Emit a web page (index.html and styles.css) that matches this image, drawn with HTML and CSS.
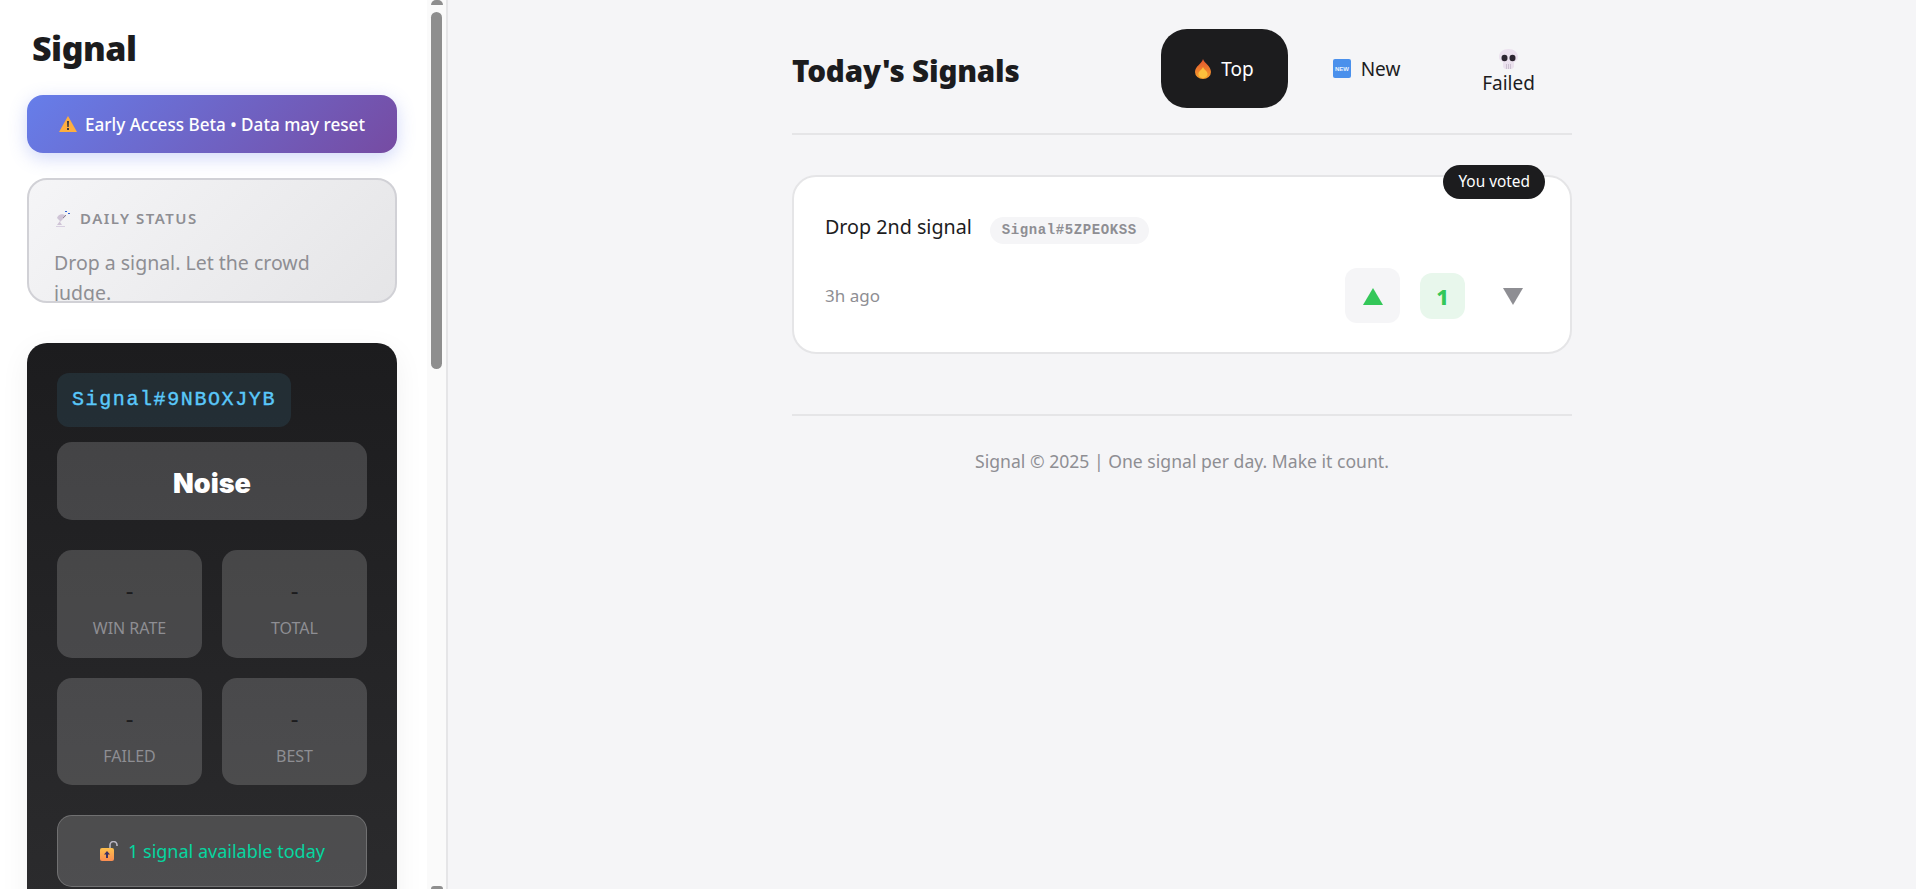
FILE: index.html
```html
<!DOCTYPE html>
<html lang="en">
<head>
  <meta charset="UTF-8" />
  <title>Signal</title>
  <link rel="stylesheet" href="styles.css">
</head>
<body>
  <aside class="sidebar">
    <div class="sidebar-inner">
      <h1 class="logo">Signal</h1>

      <div class="beta-banner">
        <svg class="emoji" width="18" height="16" viewBox="0 0 18 16"><path d="M9 0 18 16H0Z" fill="#fdae3f"/><path d="M8 5h2l-.3 6H8.3Z" fill="#3b3a3f"/><rect x="8" y="12" width="2" height="2" fill="#3b3a3f"/></svg>
        <span>Early Access Beta • Data may reset</span>
      </div>

      <div class="status-card">
        <div class="status-head">
          <svg class="emoji" width="15" height="17" viewBox="0 0 15 17"><path d="M2 15 5 11 2 8C3 4 8 3 11 6L5 12 7 15Z" fill="#cfc4d6"/><path d="M1 16h9v1H1Z" fill="#d8cfe0"/><path d="M8 8 11 5" stroke="#8f8796" stroke-width="1"/><path d="M10 1h2v1h-2ZM13 3h2v1h-2Z" fill="#2f62d8"/></svg>
          <span>DAILY STATUS</span>
        </div>
        <p class="status-text">Drop a signal. Let the crowd judge.</p>
      </div>

      <div class="profile-card">
        <div class="signal-id">Signal#9NBOXJYB</div>
        <div class="rank">Noise</div>
        <div class="stats">
          <div class="stat"><div class="stat-value">-</div><div class="stat-label">WIN RATE</div></div>
          <div class="stat"><div class="stat-value">-</div><div class="stat-label">TOTAL</div></div>
          <div class="stat"><div class="stat-value">-</div><div class="stat-label">FAILED</div></div>
          <div class="stat"><div class="stat-value">-</div><div class="stat-label">BEST</div></div>
        </div>
        <div class="available">
          <svg class="emoji" width="20" height="20" viewBox="0 0 20 20"><path d="M11 8V4a3.5 3.5 0 0 1 7 0v1" fill="none" stroke="#b9b6c2" stroke-width="1.6"/><defs><linearGradient id="lockfill" x1="0" y1="0" x2="0" y2="1"><stop offset="0" stop-color="#fdc04c"/><stop offset="1" stop-color="#fb8d52"/></linearGradient></defs><rect x="1" y="7" width="14" height="13" rx="2" fill="url(#lockfill)"/><path d="M8 10 11 13.5H9V17H7V13.5H5Z" fill="#3b3166"/></svg>
          <span>1 signal available today</span>
        </div>
      </div>
    </div>

    <div class="scrollbar">
      <div class="scroll-arrow scroll-arrow-up"></div>
      <div class="scroll-thumb"></div>
      <div class="scroll-arrow scroll-arrow-down"></div>
    </div>
  </aside>

  <main class="main">
    <div class="content">
      <header class="feed-header">
        <h2 class="feed-title">Today's Signals</h2>
        <nav class="tabs">
          <button class="tab tab-active">
            <svg class="emoji" width="16" height="20" viewBox="0 0 14 20" preserveAspectRatio="none"><defs><linearGradient id="flame" x1="0" y1="0" x2="0" y2="1"><stop offset="0" stop-color="#e2532f"/><stop offset="1" stop-color="#f7a02c"/></linearGradient></defs><path d="M7 0C8 4 14 7 14 13A7 7 0 0 1 0 13C0 7 6 5 7 0Z" fill="url(#flame)"/><path d="M7 8C8 11 11 12 11 15A4 4 0 0 1 3 15C3 12 6 11 7 8Z" fill="#fbbf3c"/></svg>
            <span>Top</span>
          </button>
          <button class="tab">
            <svg class="emoji" width="18" height="19" viewBox="0 0 18 19"><rect width="18" height="19" rx="2" fill="#4a90ec"/><text x="9" y="12" text-anchor="middle" class="new-mark">NEW</text></svg>
            <span>New</span>
          </button>
          <button class="tab tab-stacked">
            <svg class="emoji" width="21" height="20" viewBox="0 0 21 20"><path d="M10.5 0C16 0 20 3 20 8 20 11 18 12 16 13V18L14 20H7L5 18V13C3 12 1 11 1 8 1 3 5 0 10.5 0Z" fill="#ebe1ee"/><ellipse cx="6.5" cy="9" rx="3" ry="3.2" fill="#2b2530"/><ellipse cx="14.5" cy="9" rx="3" ry="3.2" fill="#2b2530"/><path d="M8.5 15v5M10.5 15v5M12.5 15v5" stroke="#bfb3c6" stroke-width=".7"/></svg>
            <span>Failed</span>
          </button>
        </nav>
      </header>

      <article class="signal-card">
        <span class="voted-badge">You voted</span>
        <div class="signal-top">
          <span class="signal-text">Drop 2nd signal</span>
          <span class="signal-tag">Signal#5ZPEOKSS</span>
        </div>
        <div class="signal-bottom">
          <span class="signal-time">3h ago</span>
          <div class="votes">
            <button class="vote-btn vote-up"><svg width="20" height="17" viewBox="0 0 20 17"><path d="M10 0 20 17H0Z" fill="#34c759"/></svg></button>
            <span class="vote-count">1</span>
            <button class="vote-btn"><svg width="20" height="17" viewBox="0 0 20 17"><path d="M0 0H20L10 17Z" fill="#8e8e93"/></svg></button>
          </div>
        </div>
      </article>

      <footer class="page-footer">Signal © 2025 | One signal per day. Make it count.</footer>
    </div>
  </main>
</body>
</html>
```

FILE: styles.css
```css
* {
  box-sizing: border-box;
}

html, body {
  height: 100%;
}

body {
  margin: 0;
  display: flex;
  height: 889px;
  overflow: hidden;
  font-family: "Noto Sans", "Open Sans", sans-serif;
  background: #f5f5f7;
  color: #1c1c1e;
}

.emoji {
  flex-shrink: 0;
  display: block;
}

.new-mark {
  fill: #e8f2fd;
  font-family: "Liberation Sans", sans-serif;
  font-size: 6px;
  font-weight: 700;
}

/* Sidebar */
.sidebar {
  width: 448px;
  height: 889px;
  flex-shrink: 0;
  display: flex;
  background: #fff;
  border-right: 2px solid #e5e5e7;
  overflow: hidden;
}

.sidebar-inner {
  flex: 1;
  min-width: 0;
  padding: 28px 30px 0 27px;
  overflow: hidden;
}

.logo {
  margin: 0 0 26px 5px;
  font-size: 34px;
  line-height: 41px;
  font-weight: 900;
  letter-spacing: -0.5px;
}

.beta-banner {
  height: 58px;
  display: flex;
  align-items: center;
  justify-content: center;
  gap: 8px;
  border-radius: 16px;
  color: #fff;
  font-size: 17.1px;
  font-weight: 500;
  background: linear-gradient(135deg, #667eea, #764ba2);
  box-shadow: 0 5px 18px rgba(102, 126, 234, 0.3);
  margin-bottom: 25px;
}

.status-card {
  height: 125px;
  padding: 29px 30px 0 26px;
  border: 2px solid #d1d1d6;
  border-radius: 20px;
  background: linear-gradient(135deg, #f5f5f7, #e5e5e7);
  overflow: hidden;
  margin-bottom: 40px;
}

.status-head {
  display: flex;
  align-items: center;
  gap: 10px;
  color: #8e8e93;
  font-size: 15px;
  font-weight: 600;
  letter-spacing: 1.5px;
  line-height: 18px;
}

.status-text {
  margin: 21px 0 0 -1px;
  color: #8e8e93;
  font-size: 19.5px;
  line-height: 30px;
}

.profile-card {
  height: 700px;
  padding: 30px;
  border-radius: 20px;
  background: linear-gradient(180deg, #1c1c1e, #2f2f31);
  box-shadow: 0 8px 30px rgba(0, 0, 0, 0.06);
}

.signal-id {
  display: inline-block;
  height: 54px;
  padding: 0 15px;
  border-radius: 12px;
  background: rgba(90, 200, 250, 0.1);
  color: #5ac8fa;
  font-family: "Liberation Mono", monospace;
  font-size: 20px;
  font-weight: 400;
  -webkit-text-stroke: 0.4px #5ac8fa;
  line-height: 54px;
  letter-spacing: 1.6px;
  vertical-align: top;
}

.rank {
  height: 78px;
  margin-top: 15px;
  border-radius: 15px;
  background: rgba(255, 255, 255, 0.17);
  color: #fff;
  font-family: Inter, sans-serif;
  font-size: 27px;
  font-weight: 900;
  line-height: 84px;
  text-align: center;
}

.stats {
  display: grid;
  grid-template-columns: 1fr 1fr;
  gap: 20px;
  margin-top: 30px;
}

.stat {
  height: 107.5px;
  padding-top: 23px;
  border-radius: 15px;
  background: rgba(255, 255, 255, 0.17);
  text-align: center;
}

.stat-value {
  color: #1c1c1e;
  font-size: 24px;
  line-height: 34px;
}

.stat-label {
  margin-top: 11px;
  color: #8e8e93;
  font-size: 16px;
  line-height: 20px;
}

.available {
  height: 72px;
  margin-top: 30px;
  display: flex;
  align-items: center;
  justify-content: center;
  gap: 9px;
  border: 1px solid rgba(255, 255, 255, 0.2);
  border-radius: 15px;
  background: rgba(255, 255, 255, 0.17);
  color: #06d6a0;
  font-size: 18px;
}

/* fake scrollbar column */
.scrollbar {
  width: 19px;
  flex-shrink: 0;
  display: flex;
  flex-direction: column;
  align-items: center;
  background: #fafafa;
}

.scroll-arrow {
  width: 12px;
  height: 5px;
  background: #8e8e8e;
  border-radius: 6px 6px 0 0;
  flex-shrink: 0;
}

.scroll-arrow-down {
  margin-top: auto;
  height: 3px;
}

.scroll-thumb {
  width: 11px;
  height: 357px;
  margin-top: 7px;
  border-radius: 6px;
  background: #8e8e8e;
}

/* Main column */
.main {
  flex: 1;
  min-width: 0;
}

.content {
  width: 780px;
  margin: 0 auto;
  padding-top: 29px;
}

.feed-header {
  display: flex;
  align-items: center;
  justify-content: space-between;
  height: 106px;
  padding-bottom: 25px;
  border-bottom: 2px solid #e5e5e7;
}

.feed-title {
  margin: 0;
  padding-top: 4px;
  font-size: 29.6px;
  font-weight: 900;
  letter-spacing: -0.2px;
}

.tabs {
  display: flex;
  align-items: center;
  gap: 15px;
}

.tab {
  width: 127px;
  height: 79px;
  display: flex;
  align-items: center;
  justify-content: center;
  gap: 10px;
  border: 0;
  border-radius: 26px;
  background: transparent;
  color: #1c1c1e;
  font-family: inherit;
  font-size: 19px;
  font-weight: 400;
  padding: 0;
}

.tab-active {
  background: #1c1c1e;
  color: #fff;
}

.tab-stacked {
  flex-direction: column;
  gap: 1px;
  padding-top: 7px;
}

.signal-card {
  position: relative;
  height: 179px;
  margin-top: 40px;
  padding: 32px 30px 0 31px;
  border: 2px solid #e5e5e7;
  border-radius: 24px;
  background: #fff;
}

.voted-badge {
  position: absolute;
  top: -12px;
  right: 25px;
  height: 34px;
  padding: 0 15px;
  border-radius: 17px;
  background: #1c1c1e;
  color: #fff;
  font-size: 15.4px;
  line-height: 34px;
}

.signal-top {
  display: flex;
  align-items: center;
  gap: 18px;
}

.signal-text {
  font-size: 19.7px;
  line-height: 30px;
}

.signal-tag {
  height: 27px;
  margin-top: 8px;
  padding: 0 12px;
  border-radius: 14px;
  background: #f5f5f7;
  color: #8e8e93;
  font-family: "Liberation Mono", monospace;
  font-size: 14px;
  font-weight: 700;
  line-height: 27px;
  letter-spacing: 0.6px;
}

.signal-bottom {
  display: flex;
  align-items: center;
  justify-content: space-between;
  margin-top: 24px;
}

.signal-time {
  color: #8e8e93;
  font-size: 17px;
}

.votes {
  display: flex;
  align-items: center;
  gap: 20px;
}

.vote-btn {
  width: 55px;
  height: 55px;
  display: flex;
  align-items: center;
  justify-content: center;
  border: 0;
  border-radius: 12px;
  background: transparent;
  padding: 2px 0 0;
}

.vote-up {
  background: #f5f5f7;
}

.vote-count {
  width: 45px;
  height: 46px;
  border-radius: 12px;
  background: #e8f7ec;
  color: #34c759;
  font-size: 22px;
  font-weight: 800;
  line-height: 46px;
  text-align: center;
}

.page-footer {
  margin-top: 60px;
  padding-top: 31px;
  border-top: 2px solid #e5e5e7;
  color: #8e8e93;
  font-size: 17.6px;
  line-height: 28px;
  text-align: center;
}
```
